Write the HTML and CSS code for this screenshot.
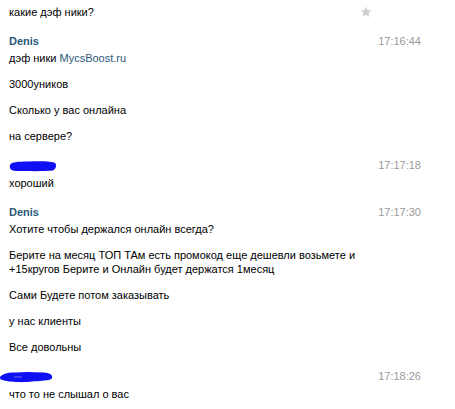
FILE: index.html
```html
<!DOCTYPE html>
<html lang="ru">
<head>
<meta charset="utf-8">
<link rel="stylesheet" href="styles.css">
</head>
<body>
<div class="log">
  <div class="msg first">
    <div class="row">
      <p class="line">какие дэф ники?</p>
      <svg class="star" viewBox="0 0 12 12" width="12" height="12"><path d="M6 0.6 L7.5 4.3 L11.5 4.5 L8.4 7 L9.5 11 L6 8.8 L2.5 11 L3.6 7 L0.5 4.5 L4.5 4.3 Z" fill="#cfcfcf"/></svg>
    </div>
  </div>

  <div class="msg">
    <div class="head"><span class="name">Denis</span><span class="time">17:16:44</span></div>
    <div class="body">
      <p class="line">дэф ники <span class="link">MycsBoost.ru</span></p>
      <p class="line">3000уников</p>
      <p class="line">Сколько у вас онлайна</p>
      <p class="line">на сервере?</p>
    </div>
  </div>

  <div class="msg anon">
    <div class="head">
      <svg class="blot" viewBox="0 0 50 12" width="50" height="12"><path d="M2 5 C3 2 10 1.5 20 1.5 C32 1 44 1 47 3 C49 5 48 9 45 10.5 C35 11.5 20 11 8 11 C3 11 1 8 2 5 Z" fill="#1010f5"/></svg>
      <span class="time">17:17:18</span>
    </div>
    <div class="body">
      <p class="line">хороший</p>
    </div>
  </div>

  <div class="msg">
    <div class="head"><span class="name">Denis</span><span class="time">17:17:30</span></div>
    <div class="body">
      <p class="line">Хотите чтобы держался онлайн всегда?</p>
      <p class="line">Берите на месяц ТОП ТАм есть промокод еще дешевли возьмете и +15кругов Берите и Онлайн будет держатся 1месяц</p>
      <p class="line">Сами Будете потом заказывать</p>
      <p class="line">у нас клиенты</p>
      <p class="line">Все довольны</p>
    </div>
  </div>

  <div class="msg anon">
    <div class="head">
      <svg class="blot2" viewBox="0 0 54 12" width="54" height="12"><path d="M0 6 C2 3 8 1 16 1.5 C24 0.5 34 1 44 1.5 C50 2 53 4 52 7 C51 9 47 9.5 40 10 C30 10.5 25 11.5 18 11 C12 11 5 10 2 9 C0 8 -0.5 7 0 6 Z" fill="#1010f5"/><path d="M14 6 L22 6" stroke="#6a6aff" stroke-width="1"/></svg>
      <span class="time">17:18:26</span>
    </div>
    <div class="body">
      <p class="line">что то не слышал о вас</p>
    </div>
  </div>
</div>
</body>
</html>
```
FILE: styles.css
```css
html, body {
  margin: 0;
  padding: 0;
  background: #fff;
}
body {
  font-family: "Liberation Sans", Arial, sans-serif;
  font-size: 11px;
  line-height: 14px;
  color: #000;
}
.log {
  padding: 5px 34px 0 9px;
  width: 412px;
  display: flex;
  flex-direction: column;
  gap: 15px;
}
.row {
  display: flex;
  justify-content: space-between;
  align-items: center;
}
.star {
  margin-right: 49px;
}
.line {
  margin: 0;
}
.head {
  display: flex;
  justify-content: space-between;
  align-items: center;
  height: 14px;
}
.name {
  font-weight: bold;
  color: #2b587a;
}
.time {
  color: #999;
}
.link {
  color: #2b587a;
}
.body {
  margin-top: 3px;
  max-width: 354px;
  display: flex;
  flex-direction: column;
  gap: 12px;
}
.anon .body {
  margin-top: 4px;
}
.blot {
  margin-left: -1px;
  margin-top: 1px;
}
.blot2 {
  margin-left: -9px;
  margin-top: 1px;
}
```
